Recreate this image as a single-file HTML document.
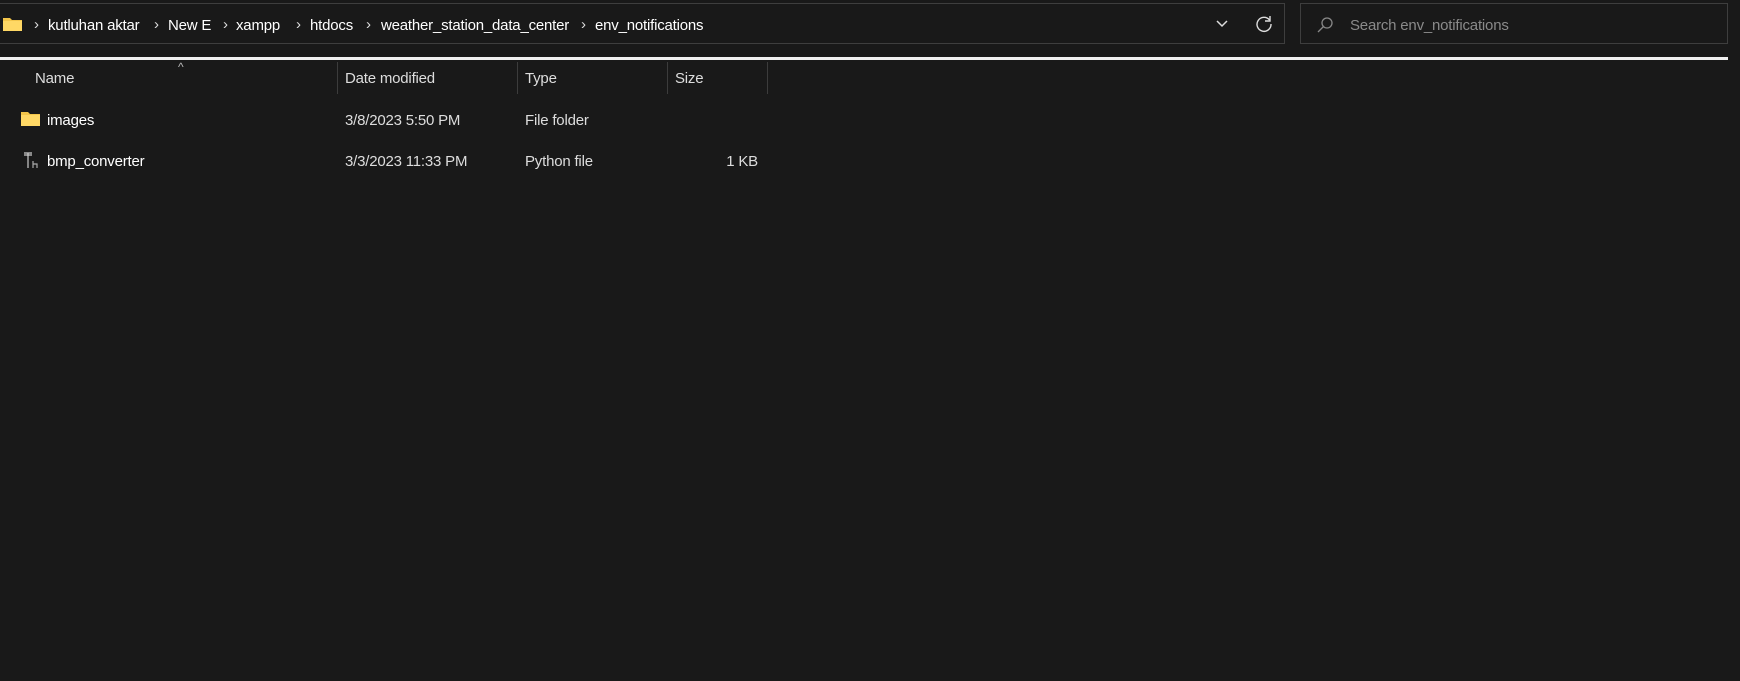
<!DOCTYPE html>
<html><head><style>
body{margin:0;width:1740px;height:681px;background:#191919;font-family:"Liberation Sans",sans-serif;color:#fff;overflow:hidden;position:relative}
.a{position:absolute;white-space:nowrap}
.t{font-size:15px;line-height:18px;letter-spacing:-0.2px}
.sep{position:absolute;top:62px;height:32px;width:1px;background:#3c3c3c}
</style></head><body>
<div class="a" style="left:-1px;top:3px;width:1286px;height:41px;border:1px solid #3e3e3e;box-sizing:border-box"></div>
<div class="a" style="left:1300px;top:3px;width:428px;height:41px;border:1px solid #3e3e3e;box-sizing:border-box"></div>
<div class="a" style="left:0;top:57px;width:1728px;height:3px;background:#f0f0f0"></div>
<svg class="a" style="left:3px;top:16px" width="20" height="16"><path d="M0 2h7l2 2h10v11H0z" fill="#f3c54a"/><path d="M0 5h19v10H0z" fill="#ffd865"/></svg>
<div class="a t" style="top:16px;left:34px;color:#ddd">›</div>
<div class="a t" style="top:17px;left:48px">kutluhan aktar</div>
<div class="a t" style="top:16px;left:154px;color:#ddd">›</div>
<div class="a t" style="top:17px;left:168px">New E</div>
<div class="a t" style="top:16px;left:223px;color:#ddd">›</div>
<div class="a t" style="top:17px;left:236px">xampp</div>
<div class="a t" style="top:16px;left:296px;color:#ddd">›</div>
<div class="a t" style="top:17px;left:310px">htdocs</div>
<div class="a t" style="top:16px;left:366px;color:#ddd">›</div>
<div class="a t" style="top:17px;left:381px">weather_station_data_center</div>
<div class="a t" style="top:16px;left:581px;color:#ddd">›</div>
<div class="a t" style="top:17px;left:595px">env_notifications</div>
<svg class="a" style="left:1215px;top:19px" width="14" height="10"><path d="M2 2l5 5 5-5" stroke="#ddd" stroke-width="1.5" fill="none"/></svg>
<svg class="a" style="left:1255px;top:15px" width="18" height="18"><path d="M14.5 5A7 7 0 1 0 16 9" stroke="#ddd" stroke-width="1.4" fill="none"/><path d="M15 1v5h-5" stroke="#ddd" stroke-width="1.4" fill="none"/></svg>
<svg class="a" style="left:1316px;top:16px" width="18" height="18"><circle cx="11" cy="7" r="5" stroke="#888" stroke-width="1.3" fill="none"/><path d="M7.5 10.5L2 16" stroke="#888" stroke-width="1.3"/></svg>
<div class="a t" style="top:17px;left:1350px;color:#8a8a8a">Search env_notifications</div>
<div class="a" style="left:178px;top:60px;color:#bbb;font-size:12px">^</div>
<div class="a t" style="top:70px;left:35px;color:#ddd">Name</div>
<div class="sep" style="left:337px"></div>
<div class="a t" style="top:70px;left:345px;color:#ddd">Date modified</div>
<div class="sep" style="left:517px"></div>
<div class="a t" style="top:70px;left:525px;color:#ddd">Type</div>
<div class="sep" style="left:667px"></div>
<div class="a t" style="top:70px;left:675px;color:#ddd">Size</div>
<div class="sep" style="left:767px"></div>
<svg class="a" style="left:21px;top:111px" width="20" height="16"><path d="M0 1h7l2 2h10v12H0z" fill="#f3c54a"/><path d="M0 4h19v11H0z" fill="#ffd865"/></svg>
<div class="a t" style="top:112px;left:47px">images</div>
<div class="a t" style="top:112px;left:345px;color:#ddd">3/8/2023 5:50 PM</div>
<div class="a t" style="top:112px;left:525px;color:#ddd">File folder</div>
<svg class="a" style="left:23px;top:152px" width="16" height="18"><path d="M1 1h8M5 1v15M1 3h8" stroke="#ccc" stroke-width="1.2" fill="none"/><path d="M10 9v7M10 12h4v4" stroke="#aaa" stroke-width="1.2" fill="none"/></svg>
<div class="a t" style="top:153px;left:47px">bmp_converter</div>
<div class="a t" style="top:153px;left:345px;color:#ddd">3/3/2023 11:33 PM</div>
<div class="a t" style="top:153px;left:525px;color:#ddd">Python file</div>
<div class="a t" style="top:153px;left:700px;width:58px;text-align:right;color:#ddd">1 KB</div>
</body></html>
